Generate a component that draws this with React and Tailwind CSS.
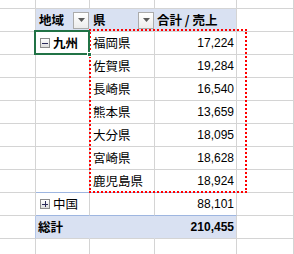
import React from 'react';

const JP = { fontFamily: '"Noto Sans CJK JP", "Liberation Sans", sans-serif' };

const prefectures = [
  ['福岡県', '17,224'],
  ['佐賀県', '19,284'],
  ['長崎県', '16,540'],
  ['熊本県', '13,659'],
  ['大分県', '18,095'],
  ['宮崎県', '18,628'],
  ['鹿児島県', '18,924'],
];

const grid = 'border-r border-b border-r-[#d4d4d4] border-b-[#d4d4d4]';

const DropButton = () => (
  <span className="w-[16px] h-[17px] border border-[#ababab] bg-gradient-to-b from-white to-[#ececec] flex items-center justify-center shrink-0">
    <svg width="7" height="4" viewBox="0 0 7 4">
      <path d="M0 0 H7 L3.5 4 Z" fill="#5a5a5a" />
    </svg>
  </span>
);

const ToggleBox = ({ plus }) => (
  <span className="relative w-[10px] h-[10px] border border-[#8c8c8c] bg-gradient-to-b from-white to-[#dcdcdc] flex items-center justify-center shrink-0">
    <span className="w-[6px] h-px bg-[#2b2b5a]" />
    {plus && <span className="absolute w-px h-[6px] bg-[#2b2b5a]" />}
  </span>
);

export default function App() {
  return (
    <div className="relative w-[294px] h-[254px] overflow-hidden bg-white text-black text-[12.5px]" style={JP}>
      <div className="grid grid-cols-[36px_54px_65px_82px_1fr] grid-rows-[9px_repeat(11,23px)]">
        {/* top partial row */}
        <div className={grid} />
        <div className={grid} />
        <div className={grid} />
        <div className={grid} />
        <div className={grid} />

        {/* header */}
        <div className={grid} />
        <div className="border-r border-b border-r-[#d9e1f2] border-b-[#d4d4d4] bg-[#d9e1f2] flex items-center justify-between pl-[3px] font-bold">
          <span>地域</span>
          <DropButton />
        </div>
        <div className="border-r border-b border-r-[#d9e1f2] border-b-[#d4d4d4] bg-[#d9e1f2] flex items-center justify-between pl-[3px] font-bold">
          <span>県</span>
          <DropButton />
        </div>
        <div className="border-r border-b border-r-[#d4d4d4] border-b-[#d4d4d4] bg-[#d9e1f2] flex items-center pl-[2px] font-bold">
          合計 / 売上
        </div>
        <div className={grid} />

        {/* prefecture rows */}
        {prefectures.map(([name, value], i) => {
          const last = i === prefectures.length - 1;
          const bottom = last ? 'border-b-[#9eb6e0]' : 'border-b-[#d4d4d4]';
          return (
            <React.Fragment key={name}>
              <div className={grid} />
              <div className={`border-r border-b border-r-[#d4d4d4] ${bottom} flex items-center pl-[4px] gap-[3px]`}>
                {i === 0 && (
                  <>
                    <ToggleBox />
                    <span className="font-bold">九州</span>
                  </>
                )}
              </div>
              <div className={`border-r border-b border-r-[#d4d4d4] ${bottom} flex items-center pl-[3px]`}>
                {name}
              </div>
              <div
                className={`border-r border-b border-r-[#d4d4d4] ${bottom} flex items-center justify-end pr-[2px] text-[12px]`}
                style={{ fontFamily: '"Liberation Sans", sans-serif' }}
              >
                {value}
              </div>
              <div className={grid} />
            </React.Fragment>
          );
        })}

        {/* 中国 */}
        <div className={grid} />
        <div className="border-r border-b border-r-[#d4d4d4] border-b-[#9eb6e0] flex items-center pl-[4px] gap-[3px]">
          <ToggleBox plus />
          <span>中国</span>
        </div>
        <div className="border-r border-b border-r-[#d4d4d4] border-b-[#9eb6e0]" />
        <div
          className="border-r border-b border-r-[#d4d4d4] border-b-[#9eb6e0] flex items-center justify-end pr-[2px] text-[12px]"
          style={{ fontFamily: '"Liberation Sans", sans-serif' }}
        >
          88,101
        </div>
        <div className={grid} />

        {/* total */}
        <div className="border-r border-b border-r-[#b4c6e7] border-b-[#d4d4d4]" />
        <div className="border-r border-b border-r-[#d9e1f2] border-b-[#d4d4d4] bg-[#d9e1f2] flex items-center pl-[2px] font-bold">
          総計
        </div>
        <div className="border-r border-b border-r-[#d9e1f2] border-b-[#d4d4d4] bg-[#d9e1f2]" />
        <div
          className="border-r border-b border-r-[#d4d4d4] border-b-[#d4d4d4] bg-[#d9e1f2] flex items-center justify-end pr-[2px] text-[12px] font-bold"
          style={{ fontFamily: '"Liberation Sans", sans-serif' }}
        >
          210,455
        </div>
        <div className={grid} />

        {/* blank row */}
        <div className={grid} />
        <div className={grid} />
        <div className={grid} />
        <div className={grid} />
        <div className={grid} />
      </div>

      {/* copy marquee */}
      <div className="absolute left-[89px] top-[29px] w-[158px] h-[164px] border-2 border-dotted border-[#ff0000] pointer-events-none" />

      {/* active cell */}
      <div className="absolute left-[34px] top-[30px] w-[56px] h-[25px] border-2 border-[#217346] pointer-events-none" />
      <div className="absolute left-[87px] top-[52px] w-[5px] h-[5px] bg-[#217346] border border-white pointer-events-none" />
    </div>
  );
}
